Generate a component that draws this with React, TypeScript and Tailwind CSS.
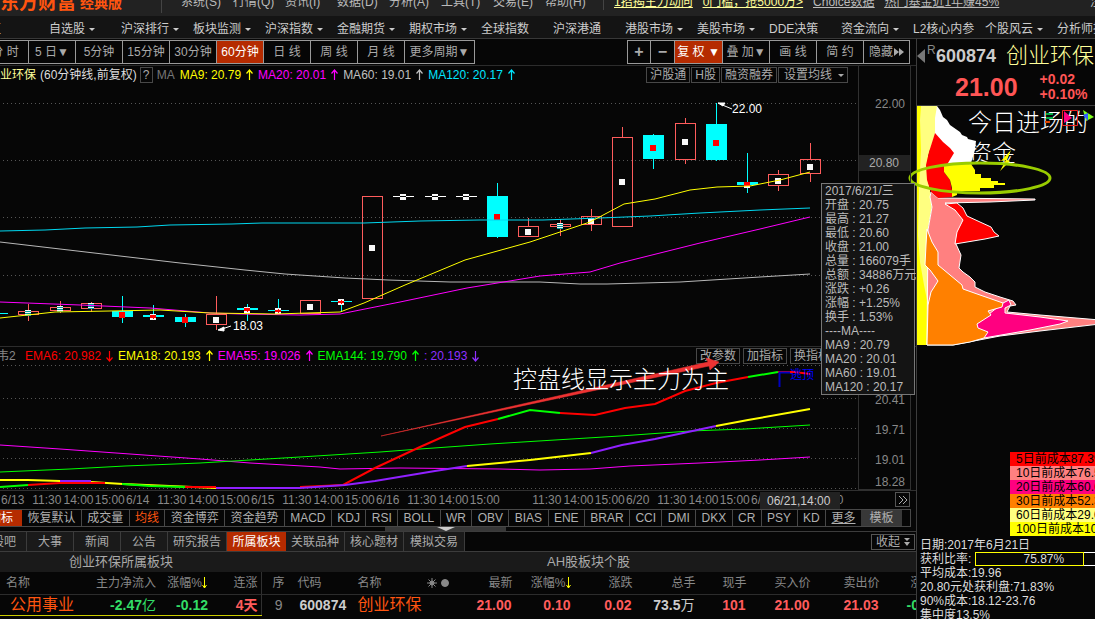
import type { ReactNode } from 'react';

/**
 * 行情终端 - 60分钟K线 / 筹码分布
 */

type Candle = {
  x: number;
  high: number;
  top: number;
  bottom: number;
  low: number;
  mark: number;
  up: boolean;
};

// 绘图坐标：[x, 最高, 实体上沿, 实体下沿, 最低, 标记, 阳线]
const RAW_CANDLES: [number, number, number, number, number, number, boolean][] = [
  [28, 304, 311, 314, 321, 313, true],
  [60, 301, 307, 310, 313, 309, true],
  [91, 302, 303, 308, 312, 306, true],
  [122, 296, 311, 317, 323, 315, false],
  [153, 305, 315, 317, 320, 317, false],
  [185, 314, 317, 322, 327, 320, false],
  [216, 296, 314, 324, 330, 320, true],
  [247, 304, 308, 310, 321, 310, false],
  [278, 299, 310, 311, 314, 311, false],
  [310, 300, 300, 313, 313, 307, true],
  [341, 299, 301, 302, 312, 302, false],
  [372, 196, 196, 298, 300, 248, true],
  [497, 183, 196, 237, 238, 217, false],
  [528, 218, 226, 236, 237, 232, true],
  [560, 219, 224, 226, 236, 226, true],
  [591, 209, 216, 224, 231, 221, true],
  [622, 127, 137, 226, 227, 182, true],
  [653, 134, 135, 159, 169, 148, false],
  [685, 118, 123, 159, 164, 142, true],
  [716, 103, 124, 160, 161, 143, false],
  [747, 153, 182, 185, 193, 185, false],
  [778, 170, 174, 185, 191, 181, true],
  [810, 143, 159, 173, 182, 167, true],
];

const CANDLES: Candle[] = RAW_CANDLES.map(([x, high, top, bottom, low, mark, up]) => ({ x, high, top, bottom, low, mark, up }));

const MA_LINES = [
  { color: '#00d8f0', points: '0,231 45,230 85,228 137,227 170,225 232,224 262,223 364,223 420,221 480,220 543,220 600,218 650,216 700,213 760,210 810,208' },
  { color: '#b8b8b8', points: '0,242 60,249 120,256 180,263 245,270 285,274 345,278 388,280 450,282 540,282 580,284 607,284 680,282 760,277 810,274' },
  { color: '#ff00ff', points: '0,302 80,305 150,308 210,313 240,314 300,315 340,314 400,302 467,288 540,276 590,272 620,263 700,243 760,229 810,217' },
  { color: '#ffff00', points: '0,318 55,312 110,311 160,310 210,313 275,314 340,312 364,303 405,285 465,260 530,242 590,222 624,204 655,199 690,190 717,187 750,186 780,180 810,172' },
];

const EMA_LINES = [
  { color: '#ff00ff', width: 1, points: '0,445 60,449 130,454 200,459 250,463 320,467 340,469 400,468 500,469 540,470 590,469 630,466 700,463 760,460 810,457' },
  { color: '#00ff00', width: 1, points: '0,472 70,469 125,466 200,463 250,460 300,457 380,452 420,449 490,444 555,440 620,436 690,431 745,429 810,425' },
  { color: '#ffff00', width: 2, points: '0,480 28,480 60,481' },
  { color: '#9020ff', width: 2, points: '60,481 91,481' },
  { color: '#ffff00', width: 2, points: '91,482 123,484 170,486 216,488' },
  { color: '#00ff00', width: 2, points: '0,487 28,485' },
  { color: '#ff0000', width: 2, points: '28,485 60,483 105,483' },
  { color: '#00ff00', width: 2, points: '122,484 150,486 185,487' },
  { color: '#ff0000', width: 2, points: '185,487 216,487' },
  { color: '#ff0000', width: 2, points: '300,487 343,485 375,468 420,447 465,427 498,419' },
  { color: '#00ff00', width: 2, points: '498,419 530,410 560,413' },
  { color: '#ff0000', width: 2, points: '560,413 595,415 625,408 655,404 685,391 716,383 748,377' },
  { color: '#00ff00', width: 2, points: '748,377 778,372' },
  { color: '#ff0000', width: 2, points: '778,372 795,372 810,374' },
  { color: '#9020ff', width: 2, points: '216,488 300,488 345,485 375,481 435,471 467,466' },
  { color: '#ffff00', width: 2, points: '467,466 530,460 591,453' },
  { color: '#9020ff', width: 2, points: '591,453 622,445 655,439 716,426' },
  { color: '#ffff00', width: 2, points: '716,426 748,420 810,409' },
];

const MENUS = ['系统(S)', '行情(Q)', '资讯(I)', '数据(D)', '分析(A)', '工具(T)', '交易(E)', '帮助(H)'];

const NAV = [
  ['专区', false], ['自选股', true], ['沪深排行', true], ['板块监测', true], ['沪深指数', true],
  ['金融期货', true], ['期权市场', true], ['全球指数', false], ['沪深港通', false], ['港股市场', true],
  ['美股市场', true], ['DDE决策', false], ['资金流向', true], ['L2核心内参', false], ['个股风云', true], ['分析师指数', false],
] as [string, boolean][];

const PERIODS = ['分 时', '5 日▼', '5分钟', '15分钟', '30分钟', '60分钟', '日 线', '周 线', '月 线'];

const TIMES = [
  ['6/13', '11:30', '14:00', '15:00'],
  ['6/14', '11:30', '14:00', '15:00'],
  ['6/15', '11:30', '14:00', '15:00'],
  ['6/16', '11:30', '14:00', '15:00'],
  ['', '11:30', '14:00', '15:00'],
  ['6/20', '11:30', '14:00', '15:00'],
  ['6/21', '11:30', '14:00', ''],
];

const INDICATORS = [
  '恢复默认', '成交量', '均线', '资金博弈', '资金趋势', 'MACD', 'KDJ', 'RSI', 'BOLL', 'WR', 'OBV',
  'BIAS', 'ENE', 'BRAR', 'CCI', 'DMI', 'DKX', 'CR', 'PSY', 'KD',
];

const QUOTE = [
  '2017/6/21/三', '开盘 : 20.75', '最高 : 21.27', '最低 : 20.60', '收盘 : 21.00', '总量 : 166079手',
  '总额 : 34886万元', '涨跌 : +0.26', '涨幅 : +1.25%', '换手 : 1.53%', '----MA----',
  'MA9 : 20.79', 'MA20 : 20.01', 'MA60 : 19.01', 'MA120 : 20.17',
];

const COSTS = [
  { label: '5日前成本87.3%', cls: 'bg-[#ff0000]' },
  { label: '10日前成本76.5%', cls: 'bg-[#ff8080]' },
  { label: '20日前成本60.6%', cls: 'bg-[#ff0080]' },
  { label: '30日前成本52.3%', cls: 'bg-[#ff8000]' },
  { label: '60日前成本29.0%', cls: 'bg-[#ffff80]' },
  { label: '100日前成本10.2%', cls: 'bg-[#ffff00]' },
];

function Arrow({ down = false }: { down?: boolean }) {
  return (
    <svg viewBox="0 0 8 12" className="ml-1 mr-[5px] h-3 w-2 shrink-0" fill="none" stroke="currentColor" strokeWidth="1.2">
      <path d={down ? 'M4.5 1V11M1.5 7.5L4.5 11L7.5 7.5' : 'M4.5 11V1M1.5 4.5L4.5 1L7.5 4.5'} />
    </svg>
  );
}

function Caret() {
  return (
    <svg viewBox="0 0 6 3" className="ml-1 h-[3px] w-[6px] shrink-0" fill="currentColor">
      <path d="M0 0H6L3 3Z" />
    </svg>
  );
}

function SmallButton({ children }: { children: ReactNode }) {
  return (
    <button className="flex h-4 shrink-0 items-center border border-[#484848] px-[3px] text-[12px] leading-[14px] text-[#aaaaaa]">
      {children}
    </button>
  );
}

function Legend({ label, color, down }: { label: string; color: string; down?: boolean }) {
  return (
    <span className={`flex shrink-0 items-center ${color}`}>
      {label}
      <Arrow down={down} />
    </span>
  );
}

function SortArrow() {
  return (
    <svg viewBox="0 0 5 12" className="inline-block h-3 w-[5px] align-[-2px]" fill="none" stroke="#ffff00">
      <path d="M2.5 0V11M0.5 8L2.5 11L4.5 8" />
    </svg>
  );
}

function TopBar() {
  return (
    <header className="h-4 shrink-0 overflow-hidden bg-[#222222]">
      <div className="-mt-3 flex h-7 items-center text-[12px] leading-4 text-[#bbbbbb]">
        <div className="flex w-[162px] shrink-0 items-center gap-1 border-r border-[#444444] pt-[2px] font-bold text-[#ff5510]">
          <span className="text-[19px] leading-5">东方财富</span>
          <span className="text-[14px] leading-5">经典版</span>
        </div>
        <nav className="flex w-[442px] shrink-0 border-r border-[#444444] pl-[19px]">
          {MENUS.map((m) => (
            <button key={m} className="w-[52px] shrink-0 text-left">{m}</button>
          ))}
        </nav>
        <div className="flex flex-1 gap-[10px] whitespace-nowrap pl-[10px] underline">
          <a href="#lead" className="text-[#ffff99]">1招揭主力动向</a>
          <a href="#open" className="text-[#ffff99]">0门槛，抢5000万&gt;</a>
          <a href="#choice">Choice数据</a>
          <a href="#fund">热门基金近1年赚45%</a>
        </div>
        <a href="#signup" className="w-[5px] shrink-0 whitespace-nowrap">注册</a>
      </div>
    </header>
  );
}

function Nav() {
  return (
    <nav className="-ml-[23px] flex h-[22px] shrink-0 bg-[#141414] text-[12px] text-[#cccccc]">
      {NAV.map(([label, more]) => (
        <a key={label} href="#nav" className="flex w-[72px] shrink-0 items-center whitespace-nowrap pt-1 leading-4">
          {label}
          {more && <Caret />}
        </a>
      ))}
    </nav>
  );
}

function Toolbar() {
  const cell = 'h-full shrink-0 border-r border-[#999999] whitespace-nowrap';
  return (
    <div className="flex h-[27px] shrink-0 items-center justify-between border-t border-[#383838] pr-[6px] text-[12px] text-[#aaaaaa]">
      <div className="-ml-[18px] flex h-6 border-y border-[#999999]">
        {PERIODS.map((p) => (
          <button key={p} className={`${cell} w-[47px] ${p === '60分钟' ? 'bg-[#b52b00] text-white' : ''}`}>{p}</button>
        ))}
        <button className={`${cell} w-[70px]`}>更多周期▼</button>
      </div>
      <div className="flex h-6 border-y border-l border-[#999999]">
        <button className={`${cell} w-[23px] text-[16px] font-bold leading-4`}>+</button>
        <button className={`${cell} w-6 text-[16px] font-bold leading-4`}>−</button>
        <button className={`${cell} w-12 bg-[#b52b00] text-white`}>复 权 ▼</button>
        <button className={`${cell} w-[47px]`}>叠 加▼</button>
        <button className={`${cell} w-[47px]`}>画 线</button>
        <button className={`${cell} w-[47px]`}>简 约</button>
        <button className={`${cell} flex w-[46px] items-center justify-center gap-px`}>
          隐藏
          <svg viewBox="0 0 10 8" className="h-2 w-[10px]" fill="currentColor"><path d="M0 0L5 4L0 8ZM5 0L10 4L5 8Z" /></svg>
        </button>
      </div>
    </div>
  );
}

function CandleShape({ c }: { c: Candle }) {
  const h = c.bottom - c.top;
  const redTop = Math.max(c.mark - 3, c.top);
  const redBottom = Math.min(c.mark + 3, c.bottom + 1);
  if (c.up) {
    return (
      <g>
        <path d={`M${c.x + 0.5} ${c.high}V${c.top}M${c.x + 0.5} ${c.bottom}V${c.low}`} stroke="#ff5c5c" />
        <rect x={c.x - 9.5} y={c.top + 0.5} width="20" height={h} fill="none" stroke="#ff5c5c" />
        <rect x={c.x - 3} y={c.mark - 3} width="6" height="6" fill="#f8f8f8" />
        {h < 6 && <path d={`M${c.x - 3} ${c.mark - 1.5}h6m-6 2h6m-6 2h6`} stroke="#009999" />}
      </g>
    );
  }
  return (
    <g>
      <path d={`M${c.x + 0.5} ${c.high}V${c.low}`} stroke="#00ffff" />
      <rect x={c.x - 10} y={c.top} width="21" height={h} fill="#00ffff" />
      <rect x={c.x - 3} y={c.mark - 3} width="6" height="6" fill="#f8f8f8" />
      <rect x={c.x - 3} y={redTop} width="6" height={redBottom - redTop} fill="#ff0000" />
      {h < 3 && <path d={`M${c.x + 0.5} ${c.mark - 2}v4`} stroke="#ff0000" />}
    </g>
  );
}

function PriceChart() {
  return (
    <section className="relative flex h-[281px] shrink-0 border-t border-[#2c2c2c] pr-[5px]">
      <div className="min-w-0 flex-1">
        <div className="-ml-3 flex h-[18px] items-center pr-[10px] text-[12px] leading-4">
          <span className="shrink-0 text-[#ffff99]">创业环保</span>
          <span className="ml-1 shrink-0 text-[#dddddd]">(60分钟线,前复权)</span>
          <button className="ml-[3px] h-4 w-[13px] shrink-0 border border-[#484848] leading-[14px] text-[#aaaaaa]">?</button>
          <span className="mx-1 w-[19px] shrink-0 text-[#777777]">MA</span>
          <Legend label="MA9: 20.79" color="text-[#ffff00]" />
          <Legend label="MA20: 20.01" color="text-[#ff00ff]" />
          <Legend label="MA60: 19.01" color="text-[#c0c0c0]" />
          <Legend label="MA120: 20.17" color="text-[#00e5ff]" />
          <div className="ml-auto flex gap-px">
            <SmallButton>沪股通</SmallButton>
            <SmallButton>H股</SmallButton>
            <SmallButton>融资融券</SmallButton>
            <SmallButton><span className="px-[2px]">设置均线</span><Caret /></SmallButton>
          </div>
        </div>
        <svg viewBox="0 84 858 262" className="h-[262px] w-full">
          {[103.5, 160.5, 217.5, 275.5].map((y) => (
            <path key={y} d={`M3 ${y}H858`} stroke="#555555" strokeDasharray="1 3" />
          ))}
          <g>{CANDLES.map((c) => <CandleShape key={c.x} c={c} />)}</g>
          {[403, 435, 466].map((x) => (
            <g key={x}>
              <rect x={x - 3} y="194" width="6" height="6" fill="#f8f8f8" />
              <path d={`M${x - 3} 196.5h6`} stroke="#060606" />
              <path d={`M${x - 10} 196.5h7m6 0h8`} stroke="#ffffff" />
            </g>
          ))}
          <path d="M0 313.5H8" stroke="#00ffff" />
          {MA_LINES.map((l) => (
            <polyline key={l.color} points={l.points} fill="none" stroke={l.color} />
          ))}
          <g stroke="#ffffff" fill="#ffffff">
            <path d="M732 109L720 104M718 103L725 103L723 106Z" />
            <path d="M231 326L222 329M218 330L224 327L224 331Z" />
          </g>
          <g fill="#ffffff" className="text-[12px]">
            <text x="732" y="113">22.00</text>
            <text x="233" y="330">18.03</text>
          </g>
        </svg>
      </div>
      <div className="w-[53px] shrink-0 border-x border-[#303030] text-[12px] leading-4 text-[#888888]">
        <div className="mt-[30px] pr-[5px] text-right">22.00</div>
        <div className="mt-[43px] bg-[#222222] pr-[11px] text-right text-[#aaaaaa]">20.80</div>
      </div>

      {/* 十字光标浮窗 */}
      <div className="absolute right-px top-[117px] z-10 w-[94px] whitespace-nowrap border border-[#777777] bg-[#141414] pl-[3px] text-[12px] leading-[14px] text-[#bbbbbb]">
        {QUOTE.map((q) => <div key={q}>{q}</div>)}
      </div>
    </section>
  );
}

function EmaChart() {
  return (
    <section className="relative flex h-36 shrink-0 border-t border-[#2c2c2c] pr-[5px]">
      <div className="min-w-0 flex-1">
        <div className="-ml-[3px] flex h-[18px] items-center text-[12px] leading-4">
          <span className="w-7 shrink-0 text-[#888888]">韦2</span>
          <Legend label="EMA6: 20.982" color="text-[#ff0000]" down />
          <Legend label="EMA18: 20.193" color="text-[#ffff00]" />
          <Legend label="EMA55: 19.026" color="text-[#ff00ff]" />
          <Legend label="EMA144: 19.790" color="text-[#00ff00]" />
          <Legend label=": 20.193" color="text-[#9030ff]" down />
          <div className="ml-auto mr-[24px] flex gap-[3px]">
            <SmallButton>改参数</SmallButton>
            <SmallButton>加指标</SmallButton>
            <SmallButton>换指标</SmallButton>
          </div>
        </div>
        <svg viewBox="0 365 858 125" className="h-[125px] w-full overflow-visible">
          {[365.5, 398.5, 428.5, 458.5, 488.5].map((y) => (
            <path key={y} d={`M3 ${y}H858`} stroke="#555555" strokeDasharray="1 3" />
          ))}
          {EMA_LINES.map((l) => (
            <polyline key={l.points} points={l.points} fill="none" stroke={l.color} strokeWidth={l.width} />
          ))}
          <path d="M779.5 387V372.5H790" fill="none" stroke="#0000c0" strokeWidth="2" />
          <text x="790" y="379" fill="#0000ff" className="text-[12px]">逃顶</text>
          <path d="M381 436L708 362L706 358L719 362L710 370L709 366Z" fill="#ee3333" stroke="#ee3333" strokeWidth="0.5" />
          <text x="513" y="388" fill="#ffffff" className="text-[24px] font-light">控盘线显示主力为主</text>
        </svg>
      </div>
      <div className="w-[53px] shrink-0 border-x border-b border-[#303030] pr-[5px] text-right text-[12px] leading-4 text-[#888888]">
        <div className="mt-[45px]">20.41</div>
        <div className="mt-[14px]">19.71</div>
        <div className="mt-[14px]">19.01</div>
        <div className="mt-[7px] leading-[14px]">18.28</div>
      </div>
    </section>
  );
}

function TimeAxis() {
  return (
    <div className="relative flex h-[19px] shrink-0 items-center overflow-hidden border-t border-[#303030] pl-px text-[12px] leading-4 text-[#888888]">
      {TIMES.map((day, i) => (
        <div key={i} className="grid w-[125px] shrink-0 grid-cols-4">
          {day.map((t, j) => <span key={j}>{t}</span>)}
        </div>
      ))}
      <span className="absolute right-[76px] top-px h-[18px] w-20 bg-[#222222] pl-[7px] leading-[18px] text-[#cccccc]">06/21,14:00</span>
      <button className="absolute right-[6px] top-px flex h-[15px] w-[15px] items-center justify-center border border-[#555555] bg-[#060606]">
        <svg viewBox="0 0 10 8" className="h-2 w-[10px]" fill="none" stroke="#aaaaaa"><path d="M1 0L5 4L1 8M5 0L9 4L5 8" /></svg>
      </button>
    </div>
  );
}

function IndicatorBar() {
  return (
    <div className="mr-[5px] flex h-[18px] shrink-0 border border-l-0 border-[#484848] text-[12px] leading-4 text-[#b0b0b0]">
      <button className="flex w-[22px] shrink-0 justify-end overflow-hidden whitespace-nowrap bg-[#b52b00] pr-[9px] text-white">指标</button>
      <div className="flex min-w-0 flex-1">
        {INDICATORS.map((name) => (
          <button key={name} className={`grow whitespace-nowrap border-r border-[#484848] px-[5px] ${name === '均线' ? 'text-[#ff5510]' : ''}`}>{name}</button>
        ))}
      </div>
      <button className="w-[35px] shrink-0 underline">更多</button>
      <button className="mr-2 w-[41px] shrink-0 bg-[#383838]">模板</button>
    </div>
  );
}

function InfoTabs() {
  const tab = 'h-full shrink-0 whitespace-nowrap border-r border-[#3c3c3c] bg-[#1a1a1a]';
  return (
    <div className="flex h-[21px] shrink-0 items-center border-y border-[#3c3c3c] text-[12px] leading-4 text-[#aaaaaa]">
      <button className={`${tab} flex w-[27px] items-center justify-end overflow-hidden pr-[10px]`}>股吧</button>
      <button className={`${tab} w-[47px]`}>大事</button>
      <button className={`${tab} w-[47px]`}>新闻</button>
      <button className={`${tab} w-[47px]`}>公告</button>
      <button className={`${tab} w-[59px]`}>研究报告</button>
      <button className="h-full w-[59px] shrink-0 bg-[#b52b00] text-white">所属板块</button>
      <button className={`${tab} w-[59px]`}>关联品种</button>
      <button className={`${tab} w-[59px]`}>核心题材</button>
      <button className={`${tab} w-[61px]`}>模拟交易</button>
      <button className="ml-auto mr-px flex h-4 w-11 items-center justify-center gap-1 border border-[#555555] leading-[14px]">
        收起
        <svg viewBox="0 0 6 8" className="h-2 w-[6px]" fill="currentColor"><path d="M0 0H6L3 3ZM0 4H6L3 8Z" /></svg>
      </button>
    </div>
  );
}

function SectorTable() {
  return (
    <table className="w-[261px] shrink-0 table-fixed border-r border-[#303030] text-right">
      <colgroup>
        <col className="w-[80px]" />
        <col className="w-[80px]" />
        <col className="w-[51px]" />
        <col className="w-[50px]" />
      </colgroup>
      <thead className="text-[12px] leading-4 text-[#888888]">
        <tr className="h-[22px] border-b border-[#2c2c2c]">
          <th className="pl-[6px] text-left font-normal">名称</th>
          <th className="pr-1 font-normal">主力净流入</th>
          <th className="whitespace-nowrap pr-1 font-normal">涨幅%<SortArrow /></th>
          <th className="pr-[3px] font-normal">连涨</th>
        </tr>
      </thead>
      <tbody className="text-[14px] font-bold leading-[18px] text-[#33dd66]">
        <tr className="h-[21px] border-b border-[#cccc00]">
          <td className="whitespace-nowrap pl-[10px] text-left text-[16px] font-normal text-[#ff5510]">公用事业</td>
          <td className="pr-1">-2.47<span className="font-normal">亿</span></td>
          <td className="pr-[3px]">-0.12</td>
          <td className="pr-[3px] text-[#ff5c5c]">4天</td>
        </tr>
      </tbody>
    </table>
  );
}

function StockTable() {
  return (
    <table className="w-full min-w-0 table-fixed text-right">
      <colgroup>
        <col className="w-[26px]" />
        <col className="w-[62px]" />
        <col className="w-[102px]" />
        <col className="w-[64px]" />
        <col className="w-[58px]" />
        <col className="w-[62px]" />
        <col className="w-[63px]" />
        <col className="w-[51px]" />
        <col className="w-[64px]" />
        <col className="w-[69px]" />
        <col />
      </colgroup>
      <thead className="whitespace-nowrap text-[12px] leading-4 text-[#888888]">
        <tr className="h-[22px] border-b border-[#2c2c2c]">
          <th className="pr-[3px] font-normal">序</th>
          <th className="pl-[10px] text-left font-normal">代码</th>
          <th className="pl-2 text-left font-normal">
            <span className="flex items-center">
              名称
              <svg viewBox="0 0 24 10" className="ml-[45px] h-[10px] w-6" fill="currentColor" stroke="currentColor">
                <circle cx="5" cy="5" r="2" />
                <path d="M5 0V10M0 5H10M1.5 1.5L8.500 8.5M8.5 1.5L1.5 8.5" />
                <circle cx="18" cy="5" r="3.5" />
              </svg>
            </span>
          </th>
          <th className="pr-[3px] font-normal">最新</th>
          <th className="pr-[3px] font-normal">涨幅%<SortArrow /></th>
          <th className="pr-[3px] font-normal">涨跌</th>
          <th className="pr-[3px] font-normal">总手</th>
          <th className="pr-[3px] font-normal">现手</th>
          <th className="pr-[3px] font-normal">买入价</th>
          <th className="pr-[3px] font-normal">卖出价</th>
          <th className="pl-7 text-left font-normal">涨速</th>
        </tr>
      </thead>
      <tbody className="whitespace-nowrap text-[14px] font-bold leading-[18px] text-[#ff5c5c]">
        <tr className="h-[21px]">
          <td className="pr-[5px] font-normal text-[#888888]">9</td>
          <td className="pl-3 text-left text-[#cccccc]">600874</td>
          <td className="pl-2 text-left text-[16px] font-normal text-[#ff5510]">创业环保</td>
          <td className="pr-1">21.00</td>
          <td className="pr-[3px]">0.10</td>
          <td className="pr-1">0.02</td>
          <td className="pr-1 text-[#cccccc]">73.5<span className="font-normal">万</span></td>
          <td className="pr-1">101</td>
          <td className="pr-1">21.00</td>
          <td className="pr-1">21.03</td>
          <td className="pl-6 text-left text-[#33dd66]">-0.05</td>
        </tr>
      </tbody>
    </table>
  );
}

function ChipPanel() {
  return (
    <aside className="flex w-[179px] shrink-0 flex-col border-l border-t border-[#3c3c3c] bg-[#060606]">
      <div className="flex h-[34px] shrink-0 items-center whitespace-nowrap text-[#cccccc]">
        <svg viewBox="0 0 8 14" className="h-[14px] w-2 shrink-0" fill="#777777"><path d="M8 0V14L0 7Z" /></svg>
        <sup className="ml-[2px] w-[9px] text-[12px] leading-3 text-[#888888]">R</sup>
        <span className="text-[18px] font-bold leading-6">600874</span>
        <span className="ml-[10px] text-[22px] font-light leading-6 text-[#ffff99]">创业环保</span>
      </div>
      <div className="flex h-[33px] shrink-0 items-center whitespace-nowrap border-b border-[#3c3c3c] pb-1 pl-[38px] font-bold text-[#ff5555]">
        <span className="text-[25px] leading-8">21.00</span>
        <span className="ml-[22px] text-[14px] leading-[15px]">+0.02<br />+0.10%</span>
      </div>

      {/* 筹码分布 */}
      <svg viewBox="917 106 178 240" className="h-[240px] w-[178px] shrink-0 overflow-visible">
        <path d="M917 106H928V345H917Z" fill="#ffff00" />
        <path d="M937 106L940 110L943 117L947 120L950 125L960 132L962 135L967 137L968 139L976 141L975 150L971 163V165H930V106Z" fill="#ffffff" />
        <path d="M921 106H937L935 118L935 133L927 160L927 175L930 190L932 207L928 230L927 245L925 262L938 281L931 292L928 305L924 285L920 262L918 235L919 190L921 150L920 120Z" fill="#ffff80" />
        <g stroke="#ffffff">
          <path d="M931 192L938 198L1035 199V200L990 202L945 203L957 211L964 220L958 232L956 244L961 255L959 268L963 272L970 277L975 282L975 287L985 292L1000 297L1013 301L1016 305L1010 306L1007 312L1040 315L1100 320V324L1040 331L1000 336L953 345L927 345L928 230L932 207L930 197Z" fill="#ff8080" />
          <path d="M945 204L957 203L963 208L967 216L980 222L991 227L994 232L999 236L985 239L955 244L957 232L963 220L955 210Z" fill="#ff0000" />
          <path d="M1003 303L1009 300L1011 305L1005 308L1005 313L1040 317L1068 321L1060 324L1030 330L984 338L975 325Z" fill="#ff0080" />
          <path d="M927 229L932 242L938 252L938 265L950 275L962 285L963 289L980 295L1003 303L1002 307L988 311L991 315L977 324L978 328L988 332L984 338L970 342L953 345H927L928 305L931 292L938 281L930 270L925 265L926 245Z" fill="#ff8000" />
        </g>
        <path d="M935 133L943 142L950 148L954 153L948 163L944 172L950 180L952 190L952 197L938 198L931 192L927 180L926 165L929 152Z" fill="#ff0000" />
        <path d="M944 164H971L975 170V174H981V178H991V181H998V183H1005V185H994V188H980V191H957V195L952 197V188L950 180L944 172Z" fill="#ffff00" />
        <text x="968" y="131" fill="#ffffff" className="text-[24px] font-light">今日进场的</text>
        <text x="968" y="162" fill="#ffffff" className="text-[24px] font-light">资金</text>
        <path d="M1046 114H1053M1046 118H1053" stroke="#00aa44" strokeWidth="2" />
        <path d="M1045 122H1050" stroke="#dd4400" strokeWidth="2" />
        <path d="M1062.500 110.500H1077.500V125.500H1062.500Z" fill="none" stroke="#ee2222" />
        <path d="M1064 111L1072 118L1064 123Z" fill="#ff0080" />
        <path d="M1083 110L1094 117L1086 121Z" fill="#80ff20" />
        <path d="M1083 115L1088 113V121Z" fill="#3060ff" />
        <path d="M1011 150L1001 161L1006 160L1000 171L1010 161L1007 160Z" fill="#ffff00" />
        <ellipse cx="980" cy="178" rx="70" ry="15" fill="none" stroke="#99cc00" strokeWidth="3" />
      </svg>

      <ul className="ml-auto mt-[106px] w-[85px] shrink-0 overflow-hidden whitespace-nowrap text-[12px] leading-[14px] text-black">
        {COSTS.map((c) => <li key={c.label} className={`pl-[6px] ${c.cls}`}>{c.label}</li>)}
      </ul>
      <div className="mt-[2px] shrink-0 whitespace-nowrap pl-[3px] text-[12px] leading-[14px] text-[#dddddd]">
        <div>日期:2017年6月21日</div>
        <div className="flex">
          获利比率:
          <span className="ml-1 h-[14px] w-[109px] border border-[#ffff00] pl-[28px] text-center leading-3">75.87%</span>
          <span className="h-[14px] flex-1 border-y border-white" />
        </div>
        <div>平均成本:19.96</div>
        <div>20.80元处获利盘:71.83%</div>
        <div>90%成本:18.12-23.76</div>
        <div>集中度13.5%</div>
      </div>
    </aside>
  );
}

export default function App() {
  return (
    <div className="flex h-screen flex-col overflow-hidden bg-[#060606] font-['Liberation_Sans','Noto_Sans_CJK_SC',sans-serif]">
      <TopBar />
      <Nav />
      <div className="flex min-h-0 flex-1">
        <main className="flex min-w-0 flex-1 flex-col overflow-hidden">
          <Toolbar />
          <PriceChart />
          <EmaChart />
          <TimeAxis />
          <IndicatorBar />
          <div className="flex h-1 shrink-0 justify-center pr-[25px]">
            <div className="flex w-[121px] justify-center bg-[#383838]">
              <svg viewBox="0 0 18 4" className="h-1 w-[18px]" fill="#cccccc"><path d="M0 0H18L9 4Z" /></svg>
            </div>
          </div>
          <InfoTabs />
          <div className="flex h-5 shrink-0 bg-[#1a1a1a] text-[13px] leading-5 text-[#aaaaaa]">
            <h2 className="w-[261px] shrink-0 pr-[19px] text-center">创业环保所属板块</h2>
            <h2 className="flex-1 text-center">AH股板块个股</h2>
          </div>
          <div className="flex items-start overflow-hidden">
            <SectorTable />
            <StockTable />
          </div>
        </main>
        <ChipPanel />
      </div>
    </div>
  );
}
